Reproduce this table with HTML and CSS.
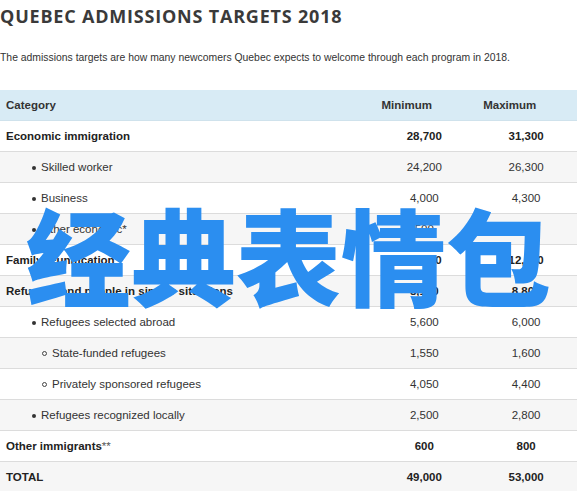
FILE: index.html
```html
<!DOCTYPE html>
<html><head>
<title>Quebec Admissions Targets 2018</title>
<link rel="stylesheet" href="styles.css">
</head><body>
<h1>QUEBEC ADMISSIONS TARGETS 2018</h1>
<p class="intro">The admissions targets are how many newcomers Quebec expects to welcome through each program in 2018.</p>
<table class="targets">
<tr class="head">
<th class="cat">Category</th>
<th class="num">Minimum</th>
<th class="num">Maximum</th>
</tr>
<tr class="group">
<td>Economic immigration</td>
<td class="val">28,700</td>
<td class="val">31,300</td>
</tr>
<tr>
<td class="lvl1">Skilled worker</td>
<td class="val">24,200</td>
<td class="val">26,300</td>
</tr>
<tr>
<td class="lvl1">Business</td>
<td class="val">4,000</td>
<td class="val">4,300</td>
</tr>
<tr>
<td class="lvl1">Other economic*</td>
<td class="val">500</td>
<td class="val">700</td>
</tr>
<tr class="group">
<td>Family reunification</td>
<td class="val">11,700</td>
<td class="val">12,100</td>
</tr>
<tr class="group">
<td>Refugees and people in similar situations</td>
<td class="val">8,100</td>
<td class="val">8,800</td>
</tr>
<tr>
<td class="lvl1">Refugees selected abroad</td>
<td class="val">5,600</td>
<td class="val">6,000</td>
</tr>
<tr>
<td class="lvl2">State-funded refugees</td>
<td class="val">1,550</td>
<td class="val">1,600</td>
</tr>
<tr>
<td class="lvl2">Privately sponsored refugees</td>
<td class="val">4,050</td>
<td class="val">4,400</td>
</tr>
<tr>
<td class="lvl1">Refugees recognized locally</td>
<td class="val">2,500</td>
<td class="val">2,800</td>
</tr>
<tr class="group">
<td>Other immigrants<span class="star">**</span></td>
<td class="val">600</td>
<td class="val">800</td>
</tr>
<tr class="group">
<td>TOTAL</td>
<td class="val">49,000</td>
<td class="val">53,000</td>
</tr>
</table>
<div class="stamp">经典表情包</div>
</body></html>
```

FILE: styles.css
```css
body {margin: 0; background-color: #fff; color: #333; font-family: "Liberation Sans", Arial, sans-serif; overflow: hidden; position: relative;}
h1 {margin: 5px 0 0 0; font-family: "Open Sans", sans-serif; font-weight: 700; font-size: 18px; line-height: 22px; letter-spacing: 0.8px; color: #3a3a3a;}
.intro {margin: 23px 0 0 0; font-size: 10.4px; line-height: 16px; color: #333; white-space: nowrap;}
.targets {margin-top: 24px; width: 577px; border-collapse: collapse; font-size: 11.5px;}
.targets td, .targets th {height: 30px; padding: 0 6px; border-bottom: 1px solid #dcdcdc; vertical-align: middle;}
.head th {background-color: #d8ebf5; font-weight: bold; text-align: left; border-bottom: 1px solid #cfe2ec;}
.head .cat {width: 363px;}
.head .num {width: 88px; padding-left: 8px;}
.targets tr:nth-child(odd) td {background-color: #f6f6f6;}
.targets tr:nth-child(even) td {background-color: #fff;}
.group td {font-weight: bold; color: #222;}
.val {text-align: center;}
.lvl1 {padding-left: 41px !important; position: relative;}
.lvl1::before {content: ""; position: absolute; left: 32px; top: 14px; width: 4px; height: 4px; border-radius: 50%; background: #333;}
.lvl2 {padding-left: 52px !important; position: relative;}
.lvl2::before {content: ""; position: absolute; left: 42px; top: 13px; width: 3px; height: 3px; border-radius: 50%; border: 1px solid #444;}
.star {font-weight: normal; color: #555;}
.stamp {position: absolute; left: 26px; top: 200px; font-family: "Noto Sans CJK SC", sans-serif; font-weight: 900; font-size: 105px; line-height: 1; color: #2b8ef0; white-space: nowrap;}
```
